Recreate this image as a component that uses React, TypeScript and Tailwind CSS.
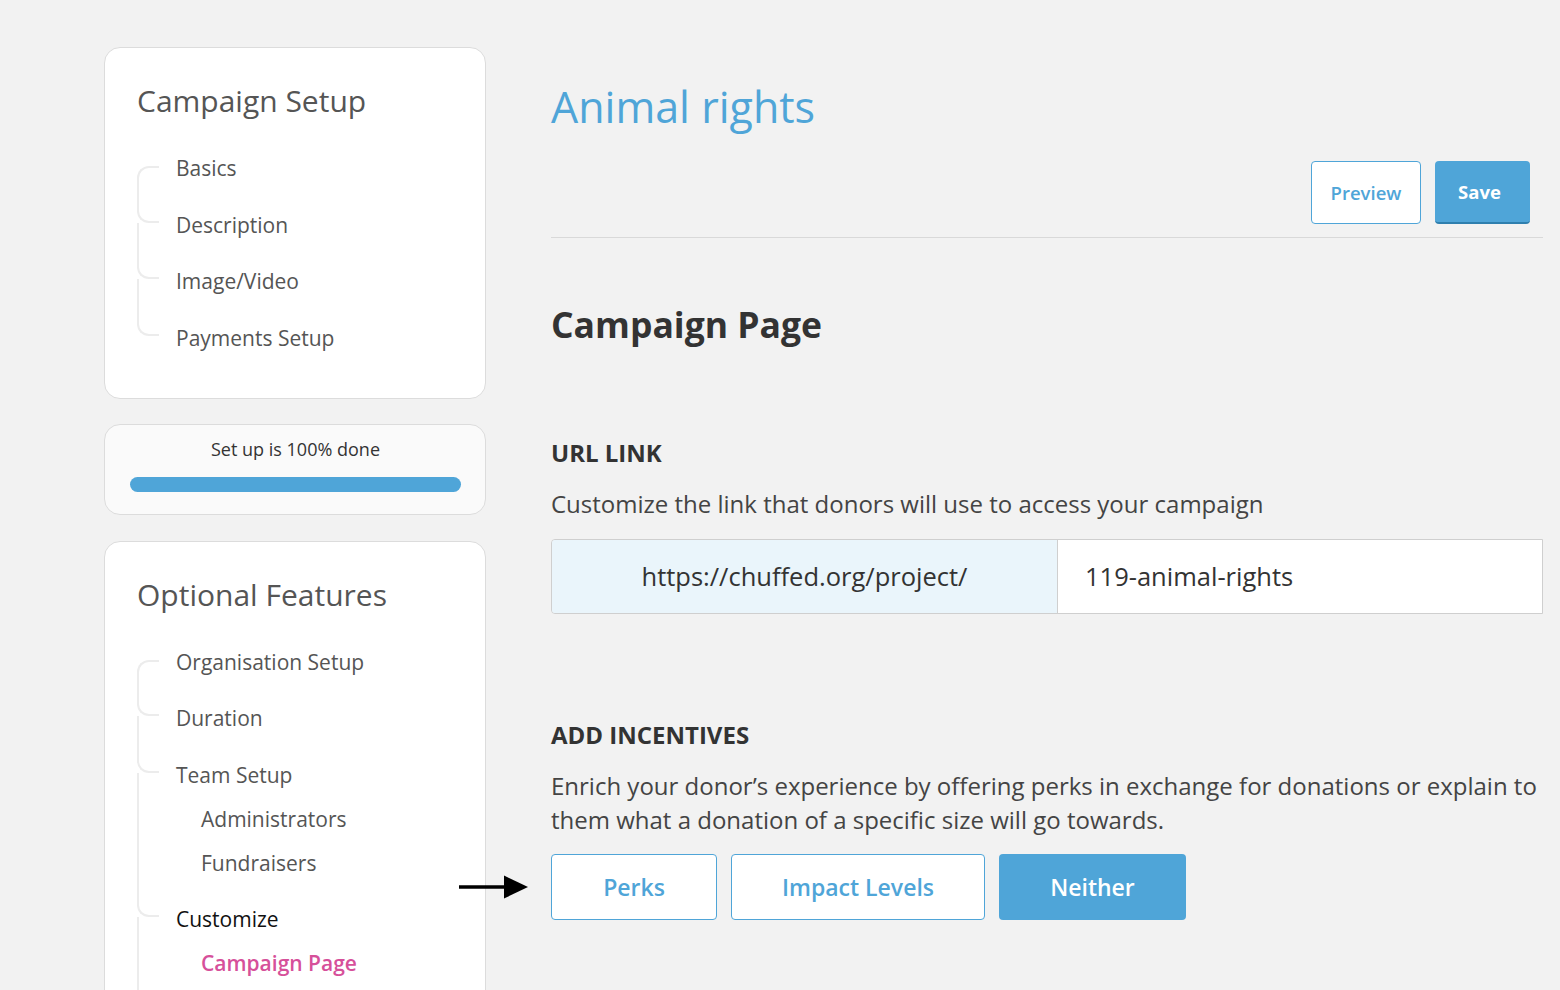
import React from "react";

type NavItem = {
  label: string;
  sub?: boolean;
  tone?: "default" | "dark" | "active";
};

const setupItems: NavItem[] = [
  { label: "Basics" },
  { label: "Description" },
  { label: "Image/Video" },
  { label: "Payments Setup" },
];

const optionalItems: NavItem[] = [
  { label: "Organisation Setup" },
  { label: "Duration" },
  { label: "Team Setup" },
  { label: "Administrators", sub: true },
  { label: "Fundraisers", sub: true },
  { label: "Customize", tone: "dark" },
  { label: "Campaign Page", sub: true, tone: "active" },
];

function NavTree({ items, openEnd }: { items: NavItem[]; openEnd?: boolean }) {
  const lastTop = items.map((i) => !i.sub).lastIndexOf(true);
  return (
    <div className="mt-[25px]">
      {items.map((item, idx) => {
        const first = idx === 0;
        const top = !item.sub;
        const spaced = top && !first;
        const belowLine = openEnd || idx < lastTop;
        const toneClass =
          item.tone === "active"
            ? "text-[#d6509a] font-semibold"
            : item.tone === "dark"
              ? "text-[#111]"
              : "text-[#555]";
        return (
          <div key={item.label} className={`relative ${spaced ? "pt-[12.5px]" : ""}`}>
            {first && (
              <span className="absolute left-0 top-[20px] bottom-0 w-[22px] border-l-2 border-t-2 border-[#ececec] rounded-tl-[12px]" />
            )}
            {spaced && (
              <span className="absolute left-0 top-0 h-[32.5px] w-[22px] border-l-2 border-b-2 border-[#ececec] rounded-bl-[12px]" />
            )}
            {spaced && belowLine && (
              <span className="absolute left-0 top-[32.5px] bottom-0 border-l-2 border-[#ececec]" />
            )}
            {!top && belowLine && (
              <span className="absolute left-0 top-0 bottom-0 border-l-2 border-[#ececec]" />
            )}
            <div
              className={`h-[44px] flex items-center text-[21px] leading-[28px] ${toneClass} ${
                item.sub ? "pl-[64px]" : "pl-[39px]"
              }`}
            >
              {item.label}
            </div>
          </div>
        );
      })}
      {openEnd && <div className="h-[60px] border-l-2 border-[#ececec]" />}
    </div>
  );
}

function SideCard({ title, children, className = "" }: { title: string; children: React.ReactNode; className?: string }) {
  return (
    <div className={`bg-white border border-[#dcdcdc] rounded-[16px] pl-[32px] pr-6 pt-[33px] ${className}`}>
      <h2 className="text-[30px] leading-[40px] text-[#555]">{title}</h2>
      {children}
    </div>
  );
}

function Arrow() {
  return (
    <svg
      className="absolute left-[-92px] top-1/2 -translate-y-1/2"
      width="70"
      height="26"
      viewBox="0 0 70 26"
    >
      <line x1="0" y1="13" x2="48" y2="13" stroke="#000" strokeWidth="3.5" />
      <polygon points="45,1.5 69,13 45,24.5" fill="#000" />
    </svg>
  );
}

export default function App() {
  return (
    <div className="min-h-screen bg-[#f2f2f2] font-['Open_Sans',sans-serif] overflow-hidden">
      <div className="flex pl-[104px] pr-[17px] pt-[47px] gap-[65px]">
        <aside className="w-[382px] shrink-0 flex flex-col">
          <SideCard title="Campaign Setup" className="pb-[38px]">
            <NavTree items={setupItems} />
          </SideCard>

          <div className="mt-[25px] bg-[#fafafa] border border-[#dcdcdc] rounded-[16px] pt-[12px] pb-[22px] pl-[25px] pr-[24px]">
            <p className="text-center text-[18px] leading-[24px] text-[#333]">Set up is 100% done</p>
            <div className="mt-[16px] h-[15px] rounded-full bg-[#4fa5d8]" />
          </div>

          <SideCard title="Optional Features" className="mt-[26px] pb-0 rounded-b-none">
            <NavTree items={optionalItems} openEnd />
          </SideCard>
        </aside>

        <main className="flex-1 min-w-0">
          <h1 className="mt-[32px] text-[43px] leading-[56px] text-[#4fa5d8]">Animal rights</h1>

          <div className="mt-[26px] flex justify-end gap-[14px] pr-[13px]">
            <button className="w-[110px] h-[63px] bg-white border border-[#4fa5d8] rounded-[4px] text-[18.5px] font-semibold text-[#4fa5d8]">
              Preview
            </button>
            <button className="w-[95px] h-[63px] pr-[6px] bg-[#4fa5d8] border-b-2 border-[#2f7fae] rounded-[4px] text-[18.5px] font-bold text-white">
              Save
            </button>
          </div>

          <div className="mt-[13px] border-t border-[#d9d9d9]" />

          <h2 className="mt-[62px] text-[35.5px] leading-[48px] font-bold text-[#333]">Campaign Page</h2>

          <h3 className="mt-[89px] text-[24px] leading-[32px] font-bold text-[#333]">URL LINK</h3>
          <p className="mt-[18px] text-[24px] leading-[34px] text-[#444]">
            Customize the link that donors will use to access your campaign
          </p>

          <div className="mt-[18px] flex h-[75px] border border-[#cfcfcf] rounded-l-[4px] overflow-hidden">
            <div className="w-[506px] shrink-0 bg-[#eaf5fb] border-r border-[#cfcfcf] flex items-center justify-center text-[25.5px] text-[#333]">
              https://chuffed.org/project/
            </div>
            <div className="flex-1 bg-white flex items-center pl-[27px] text-[25.5px] text-[#333]">
              119-animal-rights
            </div>
          </div>

          <h3 className="mt-[105px] text-[24px] leading-[32px] font-bold text-[#333]">ADD INCENTIVES</h3>
          <p className="mt-[18px] text-[24px] leading-[34px] text-[#444]">
            Enrich your donor’s experience by offering perks in exchange for donations or explain to them what a
            donation of a specific size will go towards.
          </p>

          <div className="relative mt-[17px] flex gap-[14px]">
            <Arrow />
            <button className="w-[166px] h-[66px] bg-white border border-[#4fa5d8] rounded-[4px] text-[23px] font-semibold text-[#4fa5d8]">
              Perks
            </button>
            <button className="w-[254px] h-[66px] bg-white border border-[#4fa5d8] rounded-[4px] text-[23px] font-semibold text-[#4fa5d8]">
              Impact Levels
            </button>
            <button className="w-[187px] h-[66px] bg-[#4fa5d8] rounded-[4px] text-[23px] font-semibold text-white">
              Neither
            </button>
          </div>
        </main>
      </div>
    </div>
  );
}
